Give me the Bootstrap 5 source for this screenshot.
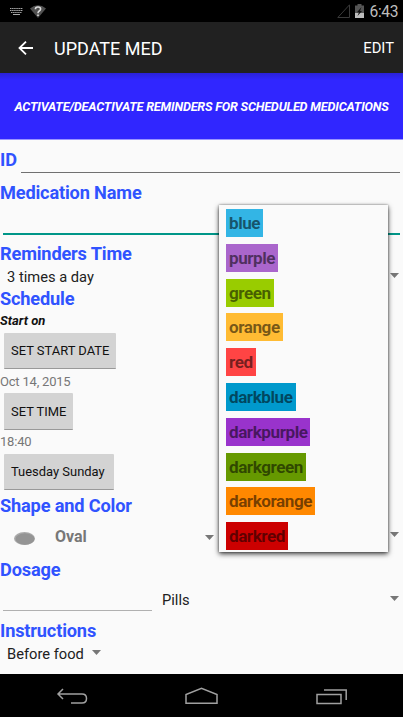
<!DOCTYPE html>
<html lang="en">
<head>
<meta charset="utf-8">
<meta name="viewport" content="width=device-width, initial-scale=1">
<title>Update Med</title>
<link href="https://cdn.jsdelivr.net/npm/bootstrap@5.3.0/dist/css/bootstrap.min.css" rel="stylesheet">
<style>
html,body{height:717px;overflow:hidden}
body{font-family:Roboto,"Noto Sans",sans-serif;background:#fafafa;color:#212121;font-size:14.7px;line-height:1;white-space:nowrap}
svg{display:block;flex:none}
.status-strip{height:22px;background:#000;color:#bdbdbd}
.clock{font-size:15.6px;letter-spacing:-.4px;margin:3px 5px 0 6px}
.app-bar{height:51px;background:#212121;color:#fff}
.app-title{font-size:18px;margin:2px 0 0 21px}
.app-bar .btn{font-size:14.8px;padding:2px 0 0;color:#fff;line-height:1}
.toggle-all{height:67px;background:linear-gradient(#2a22d8,#3026ff 7px);color:#fff;font-size:12.6px;letter-spacing:-.18px;font-weight:700;font-style:italic;border:0;border-bottom:1px solid #9a95ff;border-radius:0;line-height:1;padding:2px 0 0}
.toggle-all:hover{color:#fff}
.head-label{font-size:18.2px;letter-spacing:-.17px;font-weight:700;color:#3053ff;height:23px;line-height:22px;margin:0;padding-left:0}
.id-row{height:42px}
.id-row .line-field{height:33px;border-bottom:1px solid #707070;margin:0 3px 0 4px}
.name-field{height:30px;margin:0 3px 8px;border-bottom:2px solid #009688}
.pick{height:22px;padding:0 4px 0 7px}
.pick svg{margin-top:-3px}
.start-on{height:20px;line-height:20px;font-size:13px;color:#111}
.flat-btn{background:#d3d3d3;color:#111;border:0;border-bottom:1px solid #999;border-radius:1px;font-size:12.95px;line-height:1;padding:2px 0 0 7px;text-align:left;margin-left:4px;display:block}
.value-text{height:19px;line-height:19px;color:#777;font-size:13px;letter-spacing:-.2px}
.shape-row{height:41px;color:#777;padding-bottom:3px}
.shape-name{font-size:16px;margin-left:20px}
.dose-row{height:38px}
.dose-field{width:149px;height:29px;margin-left:3px;border-bottom:1px solid #b0b0b0}
.soft-keys{height:43px;background:#000;border-top:0}
.color-menu{left:219px;top:205px;width:169px;height:347px;background:#fafafa;box-shadow:0 2px 5px rgba(0,0,0,.75),0 0 2px rgba(0,0,0,.4);padding:4px 7px 0;z-index:5}
.swatch-row{height:34.8px}
.swatch{height:28px;line-height:29px;padding:0 3px;font-size:17.1px;letter-spacing:-.45px;font-weight:700;color:rgba(0,0,0,.54)}
</style>
<script src="https://cdn.jsdelivr.net/npm/bootstrap@5.3.0/dist/js/bootstrap.bundle.min.js"></script>
</head>
<body class="d-flex flex-column position-relative m-0">
<header>
  <div class="status-strip d-flex align-items-center">
    <svg width="13" height="8" style="margin-left:10px" viewBox="0 0 13 8" stroke="#aaa" fill="none"><path d="M0 1.500h13M0 3.500h13M1 5.500h11" stroke-dasharray="1.5 .6"/><path d="M3 7.500h7"/></svg>
    <svg width="16" height="13" style="margin-left:7px" viewBox="0 0 16 13"><path d="M0 3.500Q8-3 16 3.500L8 13Z" fill="#505050"/><path d="M5.400 4.200Q5.400 2 8 2t2.600 2Q10.600 5.200 9 6.200 8 6.900 8 8.300" fill="none" stroke="#ddd" stroke-width="1.6"/><path d="M7.200 9.500h1.600v1.600H7.200z" fill="#ddd"/></svg>
    <svg width="13" height="14" class="ms-auto" viewBox="0 0 13 14"><path d="M.8 13.500H12.500V.8Z" fill="none" stroke="#3a3a3a"/></svg>
    <svg width="9" height="14" style="margin-left:5px" viewBox="0 0 9 14"><path d="M2.500 0h4v1.500H9V14H0V1.500h2.500z" fill="#555"/><path d="M0 9h9v5H0z" fill="#bdbdbd"/><path d="M6.500 3 2 8.300h2L2.500 12 7 7H5z" fill="#111"/></svg>
    <span class="clock">6:43</span>
  </div>
  <nav class="app-bar d-flex align-items-center">
    <svg width="15" height="14" style="margin-left:18px" viewBox="0 0 15 14" fill="none" stroke="#fff" stroke-width="1.8"><path d="M15 7H1.500M8 .7 1.500 7 8 13.300"/></svg>
    <span class="app-title">UPDATE MED</span>
    <button class="btn ms-auto me-2">EDIT</button>
  </nav>
</header>
<button class="btn toggle-all w-100">ACTIVATE/DEACTIVATE REMINDERS FOR SCHEDULED MEDICATIONS</button>
<main class="flex-grow-1">
  <div class="id-row d-flex"><label class="head-label" style="margin-top:9px;width:17px">ID</label><div class="line-field flex-grow-1"></div></div>
  <h2 class="head-label">Medication Name</h2>
  <div class="name-field"></div>
  <h2 class="head-label">Reminders Time</h2>
  <div class="pick d-flex align-items-center justify-content-between"><span>3 times a day</span><svg width="9" height="5" viewBox="0 0 9 5"><path d="M0 0h9L4.500 5z" fill="#777"/></svg></div>
  <h2 class="head-label">Schedule</h2>
  <div class="start-on fw-bold fst-italic">Start on</div>
  <button class="flat-btn" style="width:112px;height:36px;margin-top:2px">SET START DATE</button>
  <div class="value-text" style="margin-top:3px">Oct 14, 2015</div>
  <button class="flat-btn" style="width:69px;height:37px;margin-top:2px">SET TIME</button>
  <div class="value-text" style="margin-top:2px">18:40</div>
  <button class="flat-btn" style="width:110px;height:36px;margin-top:3px">Tuesday Sunday</button>
  <h2 class="head-label" style="margin-top:5px">Shape and Color</h2>
  <div class="shape-row d-flex align-items-center">
    <svg width="21" height="13" style="margin:2px 0 0 14px" viewBox="0 0 21 13"><ellipse cx="10.500" cy="6.500" rx="10.500" ry="6.500" fill="#aaa"/><ellipse cx="11" cy="7" rx="9.500" ry="5.700" fill="#949494"/></svg>
    <span class="shape-name fw-bold">Oval</span>
    <svg class="ms-auto" width="9" height="5" style="margin-right:189px" viewBox="0 0 9 5"><path d="M0 0h9L4.500 5z" fill="#777"/></svg>
  </div>
  <h2 class="head-label">Dosage</h2>
  <div class="dose-row d-flex"><div class="dose-field"></div><span style="margin:11px 0 0 10px">Pills</span><svg class="ms-auto" width="9" height="5" style="margin:14px 4px 0" viewBox="0 0 9 5"><path d="M0 0h9L4.500 5z" fill="#777"/></svg></div>
  <h2 class="head-label">Instructions</h2>
  <div class="pick d-flex align-items-center"><span>Before food</span><svg class="ms-2" width="9" height="5" viewBox="0 0 9 5"><path d="M0 0h9L4.500 5z" fill="#777"/></svg></div>
</main>
<footer class="soft-keys d-flex">
  <svg width="403" height="43" viewBox="0 0 403 43" fill="none" stroke="#a0a0a0" stroke-width="1.5"><path d="M63 15l-5 5 5 5M58.500 20H82q4.500 0 4.500 4.500T82 29H71"/><path d="M186 29.300V20.500l15.500-6.300L217 20.500v8.800Z"/><path d="M317 20.500h24v9H317zM324 16h22.200v10"/></svg>
</footer>
<div class="color-menu position-absolute">
  <div class="swatch-row d-flex"><span class="swatch" style="background:#33b5e5">blue</span></div>
  <div class="swatch-row d-flex"><span class="swatch" style="background:#aa66cc">purple</span></div>
  <div class="swatch-row d-flex"><span class="swatch" style="background:#99cc00">green</span></div>
  <div class="swatch-row d-flex"><span class="swatch" style="background:#ffbb33">orange</span></div>
  <div class="swatch-row d-flex"><span class="swatch" style="background:#ff4444">red</span></div>
  <div class="swatch-row d-flex"><span class="swatch" style="background:#0099cc">darkblue</span></div>
  <div class="swatch-row d-flex"><span class="swatch" style="background:#9933cc">darkpurple</span></div>
  <div class="swatch-row d-flex"><span class="swatch" style="background:#669900">darkgreen</span></div>
  <div class="swatch-row d-flex"><span class="swatch" style="background:#ff8800">darkorange</span></div>
  <div class="swatch-row d-flex"><span class="swatch" style="background:#cc0000">darkred</span></div>
</div>
<svg width="9" height="5" class="position-absolute" style="left:390px;top:532px" viewBox="0 0 9 5"><path d="M0 0h9L4.500 5z" fill="#777"/></svg>
</body>
</html>
